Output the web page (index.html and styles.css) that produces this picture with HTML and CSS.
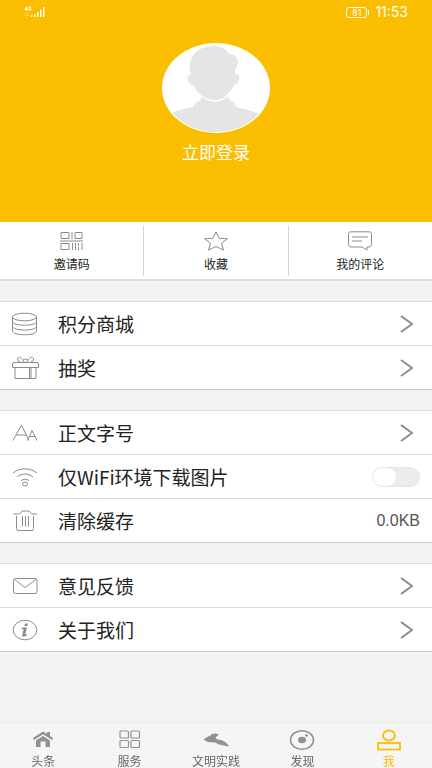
FILE: index.html
```html
<!DOCTYPE html>
<html lang="zh-CN">
<head>
<meta charset="utf-8">
<meta name="viewport" content="width=device-width, initial-scale=1">
<title>我</title>
<link rel="stylesheet" href="styles.css">
</head>
<body>
<div class="app">
  <header class="hero">
    <div class="status">
      <svg class="signal" viewBox="0 0 22 12" width="22" height="12" aria-hidden="true">
        <g fill="none" stroke="#fff" stroke-width="1"><path d="M2.5 0.5L0.8 3.5H3.4M2.8 2V5M7 1.2Q4.5 0 4.5 2.6Q4.6 5 7 4V2.8H6"/></g>
        <g fill="#fff"><path d="M7 9h1.500v2H7zM10 8h1.500v3H10zM13 6h1.500v5H13zM16 3.500h1.500V11H16zM19 1h1.500v10H19z"/><path opacity=".4" d="M1 7h4v1H1zM1 9h4v1H1z"/></g>
      </svg>
      <div class="status-right">
        <span class="battery">81</span>
        <span class="clock">11:53</span>
      </div>
    </div>
    <button class="login" type="button">
      <svg class="avatar" viewBox="0 0 108 90" width="108" height="90" aria-hidden="true">
        <defs><clipPath id="face"><ellipse cx="54" cy="45" rx="53" ry="44"/></clipPath></defs>
        <ellipse cx="54" cy="45" rx="54" ry="45" fill="#fff"/>
        <g clip-path="url(#face)" fill="#e5e5e5">
          <path d="M8 71Q15 67 31 64Q33 58 38 58Q40 55 39 50H66Q66 56 69 58Q73 58 74 64Q90 67 100 72V90H8Z"/>
          <path stroke="#fff" stroke-width="1.500" d="M28 31C24 17 32 4 48 2.500C58 1 65 5 67 10C74 10 79 16 76 23Q73 27 74 31C81 29 78 41 73 42C69 51 61 58 53 58C45 58 34 51 31 43C25 43 22 31 28 31Z"/>
        </g>
      </svg>
      <span>立即登录</span>
    </button>
  </header>

  <main>
    <nav class="tiles" aria-label="快捷入口">
      <a class="tile" href="#">
        <svg viewBox="0 0 24 20" width="24" height="20"><path d="M1 1.500h8v6H1zM15 1.500h7v6h-7zM1 12.500h8v6H1zM12 1v7M0 10h23M12.500 12v7M15.500 12v7M18.500 12v3M18.500 16v3M22 12v7"/></svg>
        邀请码
      </a>
      <a class="tile" href="#">
        <svg viewBox="0 0 24 20" width="24" height="20"><path d="M12 1L15.200 7.200L23.500 7.800L17.500 12.300L19.500 19L12 15.500L4.500 19L6.500 12.300L.5 7.800L8.800 7.200Z"/></svg>
        收藏
      </a>
      <a class="tile" href="#">
        <svg viewBox="0 0 24 20" width="24" height="20"><path d="M3 .8H21Q23.500 .8 23.500 3V13.500Q23.500 16 21 16H19V19L14 16H3Q.5 16 .5 13.500V3Q.5 .8 3 .8ZM4 6h16M4 10h10"/></svg>
        我的评论
      </a>
    </nav>

    <section class="group">
      <a class="row" href="#">
        <svg class="icon" viewBox="0 0 28 24" width="28" height="24"><ellipse cx="12.500" cy="5" rx="12" ry="3.800"/><path d="M.5 5V19C.5 24 24.500 24 24.500 19V5M.5 9.500C.5 14.500 24.500 14.500 24.500 9.500M.5 14.300C.5 19.300 24.500 19.300 24.500 14.300"/></svg>
        <span class="label">积分商城</span>
        <svg class="chevron" viewBox="0 0 13 18" width="13" height="18"><path d="M1 1L12 9L1 17"/></svg>
      </a>
      <a class="row" href="#">
        <svg class="icon" viewBox="0 0 28 24" width="28" height="24"><path d="M2 6.500H25Q26.500 6.500 26.500 8V11.500H.5V8Q.5 6.500 2 6.500ZM3 11.500V22.500H24V11.500M17.500 12V22M19 12V22M12 6C10 1 6 0 5.500 3Q5 5 8 6M15 6C17 1 21 0 21.500 3Q22 5 19 6M11 4Q13.500 2 16 4"/></svg>
        <span class="label">抽奖</span>
        <svg class="chevron" viewBox="0 0 13 18" width="13" height="18"><path d="M1 1L12 9L1 17"/></svg>
      </a>
    </section>

    <section class="group">
      <a class="row" href="#">
        <svg class="icon" viewBox="0 0 28 24" width="28" height="24"><path d="M1 19.500L9.500 4L17 19.500M4.500 14H14.500M15.500 19.500L20 9.500L25 19.500M17.500 15.500H23"/></svg>
        <span class="label">正文字号</span>
        <svg class="chevron" viewBox="0 0 13 18" width="13" height="18"><path d="M1 1L12 9L1 17"/></svg>
      </a>
      <div class="row">
        <svg class="icon" viewBox="0 0 28 24" width="28" height="24"><path d="M1 8C7 2.500 18 2.500 25 8M5 12C10 8 16 8 21 12M9 15.500Q13 12.500 17 15.500"/><ellipse cx="13" cy="19" rx="2.500" ry="2"/></svg>
        <label class="label" for="wifi-only">仅WiFi环境下载图片</label>
        <input class="switch" type="checkbox" role="switch" id="wifi-only">
      </div>
      <button class="row" type="button">
        <svg class="icon" viewBox="0 0 28 24" width="28" height="24"><path d="M1.500 5H7.500L10 2H17L19.500 5H25M4.500 7V19.500Q4.500 21.500 6 21.500H20Q21.500 21.500 21.500 19.500V7M10.500 7V17.500M13.500 7V17.500M16.500 7V17.500"/></svg>
        <span class="label">清除缓存</span>
        <span class="value">0.0KB</span>
      </button>
    </section>

    <section class="group">
      <a class="row" href="#">
        <svg class="icon" viewBox="0 0 28 24" width="28" height="24"><rect x="1.500" y="4.500" width="23.500" height="15" rx="2"/><path d="M2.500 5.500L13 13.500L24 5.500"/></svg>
        <span class="label">意见反馈</span>
        <svg class="chevron" viewBox="0 0 13 18" width="13" height="18"><path d="M1 1L12 9L1 17"/></svg>
      </a>
      <a class="row" href="#">
        <svg class="icon" viewBox="0 0 28 24" width="28" height="24"><ellipse cx="13" cy="12" rx="11.800" ry="9.800"/><path class="solid" d="M13 5.500h3l-.6 2.500h-3zM10 9.500h5L13 16.500q1 0 2-1v1.500q-2 2-5 1.500l1.500-7.500H9.500z"/></svg>
        <span class="label">关于我们</span>
        <svg class="chevron" viewBox="0 0 13 18" width="13" height="18"><path d="M1 1L12 9L1 17"/></svg>
      </a>
    </section>
  </main>

  <nav class="tabs" aria-label="主导航">
    <a class="tab" href="#">
      <svg viewBox="0 0 26 22" width="26" height="22"><path fill="currentColor" d="M3 9L13 2.500L17 5V3H20V7L23 9L22 11L13 5.300L4 11ZM6 11.500L13 7L20 11.500V18H15.500V12.500H10.500V18H6Z"/></svg>
      头条
    </a>
    <a class="tab" href="#">
      <svg viewBox="0 0 26 22" width="26" height="22"><g fill="none" stroke="currentColor" stroke-width="1.200"><rect x="3" y="2" width="8.500" height="7" rx="1"/><rect x="14" y="2" width="8.500" height="7" rx="1"/><rect x="3" y="11.500" width="8.500" height="7" rx="1"/><rect x="14" y="11.500" width="8.500" height="7" rx="1"/></g></svg>
      服务
    </a>
    <a class="tab" href="#">
      <svg viewBox="0 0 26 22" width="26" height="22"><path fill="currentColor" d="M.5 10.500L5 7.500L7 7L9 4.500L10.500 5.500L12 4L13.500 5L15 4.500Q16 6.500 13.500 7.500L12.500 9Q14 11 18 11L21.500 12.500Q24 14 26 17.500Q20 16.500 16 15.500L12 13.500L5 13L.5 10.500Z"/></svg>
      文明实践
    </a>
    <a class="tab" href="#">
      <svg viewBox="0 0 26 22" width="26" height="22"><ellipse cx="13" cy="11" rx="11.500" ry="9.300" fill="none" stroke="currentColor" stroke-width="1.500"/><ellipse cx="13" cy="11" rx="4" ry="3.300" fill="currentColor"/><ellipse cx="17.500" cy="6.500" rx="1.400" ry="1.200" fill="currentColor"/></svg>
      发现
    </a>
    <a class="tab active" href="#" aria-current="page">
      <svg viewBox="0 0 26 22" width="26" height="22"><g fill="none" stroke="currentColor" stroke-width="1.800"><ellipse cx="13" cy="6.500" rx="6" ry="5"/><rect x="2" y="14" width="22" height="6.500"/></g></svg>
      我
    </a>
  </nav>
</div>
</body>
</html>
```
FILE: styles.css
```css
* {
  box-sizing: border-box;
}

body {
  margin: 0;
  background: #f3f3f3;
  color: #222;
  font-family: "Noto Sans CJK SC", sans-serif;
}

a {
  color: inherit;
  text-decoration: none;
}

button {
  border: 0;
  background: none;
  color: inherit;
  font: inherit;
}

svg {
  display: block;
  flex: none;
}

.app {
  display: flex;
  flex-direction: column;
  min-height: 100vh;
}

main {
  flex: 1;
}

.hero {
  padding-bottom: 58px;
  background: #fabe00;
  color: #fff;
}

.status {
  display: flex;
  align-items: center;
  justify-content: space-between;
  height: 24px;
  padding: 0 24px;
}

.status-right {
  display: flex;
  align-items: center;
  gap: 8px;
  line-height: 16px;
}

.battery {
  position: relative;
  width: 21px;
  height: 11px;
  border: 1px solid #fff;
  border-radius: 3px;
  font: 9px/9px Inter, sans-serif;
  text-align: center;
}

.battery::after {
  content: "";
  position: absolute;
  top: 2px;
  right: -3px;
  width: 1px;
  height: 5px;
  background: #fff;
}

.clock {
  font: 14px/16px Inter, sans-serif;
}

.login {
  display: flex;
  flex-direction: column;
  align-items: center;
  gap: 7px;
  margin: 19px auto 0;
  padding: 0;
  font-size: 17px;
  line-height: 24px;
}

.tiles {
  display: flex;
  padding: 4px 0 3px;
  border-bottom: 2px solid #dedede;
  background: #fff;
}

.tile {
  display: flex;
  flex: 1;
  flex-direction: column;
  align-items: center;
  gap: 5px;
  padding: 5px 0 4px;
  font-size: 12px;
  line-height: 16px;
}

.tile + .tile {
  border-left: 1px solid #d4d4d4;
}

.tile svg,
.icon {
  fill: none;
  stroke: #8c8c8c;
  stroke-width: 1;
}

.tile svg .solid,
.icon .solid {
  fill: #8c8c8c;
  stroke: none;
}

.group {
  margin-top: 20px;
  border-bottom: 1px solid #cacaca;
  background: #fff;
}

.row {
  display: flex;
  align-items: center;
  width: 100%;
  height: 44px;
  padding: 0 12px;
  border-top: 1px solid #dcdcdc;
  text-align: left;
}

.label {
  flex: 1;
  margin-left: 18px;
  font-size: 19px;
  line-height: 28px;
}

.chevron {
  margin-right: 7px;
  fill: none;
  stroke: #8c8c8c;
  stroke-width: 2;
}

.value {
  color: #555;
  font: 16px/20px "Liberation Sans", sans-serif;
}

.switch {
  appearance: none;
  display: flex;
  width: 48px;
  height: 20px;
  margin: 0;
  border: 1px solid #e6e6e6;
  border-radius: 10px;
  background: #ececec;
}

.switch::before {
  content: "";
  width: 23px;
  border-radius: 10px;
  background: #fff;
}

.switch:checked {
  justify-content: flex-end;
  background: #fabe00;
}

.tabs {
  position: sticky;
  bottom: 0;
  display: flex;
  padding-top: 6px;
  border-top: 1px solid #ececec;
  background: #f5f5f5;
  color: #666;
}

.tab {
  display: flex;
  flex: 1;
  flex-direction: column;
  align-items: center;
  gap: 3px;
  font-size: 12px;
  line-height: 14px;
}

.tab svg {
  color: #919191;
}

.tab.active,
.tab.active svg {
  color: #fabe00;
}
```
